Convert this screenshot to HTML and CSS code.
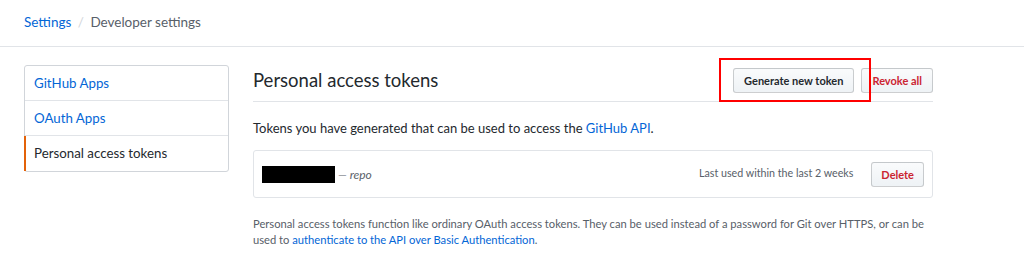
FILE: index.html
```html
<!DOCTYPE html>
<html lang="en">
<head>
  <meta charset="UTF-8" />
  <title>Personal access tokens</title>
  <link rel="stylesheet" href="styles.css">
</head>
<body>

  <!-- Breadcrumb header -->
  <div class="page-head">
    <a href="#" class="crumb-link">Settings</a>
    <span class="crumb-sep">/</span>
    <span class="crumb-current">Developer settings</span>
  </div>

  <div class="container">
    <!-- Left menu -->
    <nav class="menu">
      <a href="#" class="menu-item">GitHub Apps</a>
      <a href="#" class="menu-item">OAuth Apps</a>
      <a href="#" class="menu-item selected">Personal access tokens</a>
    </nav>

    <!-- Main column -->
    <div class="main">
      <div class="subhead">
        <h2 class="subhead-title">Personal access tokens</h2>
        <div class="subhead-actions">
          <span class="marked">
            <a href="#" class="btn btn-sm">Generate new token</a>
          </span>
          <a href="#" class="btn btn-sm btn-danger">Revoke all</a>
        </div>
      </div>

      <p class="intro">Tokens you have generated that can be used to access the <a href="#">GitHub API</a>.</p>

      <div class="token-list">
        <div class="token-row">
          <div class="token-name">
            <span class="redacted"></span>
            <em class="token-scope">&mdash; repo</em>
          </div>
          <div class="token-meta">
            <span class="last-used">Last used within the last 2 weeks</span>
            <a href="#" class="btn btn-sm btn-danger">Delete</a>
          </div>
        </div>
      </div>

      <p class="note">Personal access tokens function like ordinary OAuth access tokens. They can be used instead of a password for Git over HTTPS, or can be used to <a href="#">authenticate to the API over Basic Authentication</a>.</p>
    </div>
  </div>

</body>
</html>
```

FILE: styles.css
```css
* { margin: 0; padding: 0; box-sizing: border-box; }

body {
  font-family: Lato, "Open Sans", sans-serif;
  font-size: 13px;
  color: #24292e;
  background: #fff;
}

a { color: #0366d6; text-decoration: none; }

/* header */
.page-head {
  height: 47px;
  padding: 10px 24px 0;
  border-bottom: 1px solid #e1e4e8;
  font-size: 13.5px;
  line-height: 24px;
}
.crumb-sep { color: #d1d5da; margin: 0 3px; }
.crumb-current { color: #586069; }

/* layout */
.container {
  display: flex;
  gap: 24px;
  width: 933px;
  padding: 18px 0 0 24px;
}

/* sidebar */
.menu {
  width: 205px;
  flex-shrink: 0;
  align-self: flex-start;
  border: 1px solid #d1d5da;
  border-radius: 3px;
}
.menu-item {
  display: block;
  height: 35px;
  padding: 0 10px 0 9px;
  line-height: 34px;
  border-bottom: 1px solid #e1e4e8;
  font-size: 13.3px;
}
.menu-item:last-child { border-bottom: 0; }
.menu-item.selected {
  color: #24292e;
  border-left: 2px solid #e36209;
  padding-left: 8px;
  margin-left: -1px;
}

/* main */
.main { flex: 1; }

.subhead {
  display: flex;
  align-items: center;
  justify-content: space-between;
  padding: 2px 0 8px;
  border-bottom: 1px solid #e1e4e8;
}
.subhead-title {
  font-size: 18.5px;
  font-weight: 400;
  line-height: 26px;
}
.subhead-actions { display: flex; gap: 7px; }

.btn {
  display: inline-block;
  padding: 0 10px;
  height: 25px;
  line-height: 23px;
  font-size: 11px;
  font-weight: 700;
  color: #24292e;
  background: linear-gradient(#fafbfc, #eff3f6 90%);
  border: 1px solid rgba(27,31,35,0.2);
  border-radius: 3px;
  white-space: nowrap;
}
.btn-danger { color: #cb2431; }

/* red annotation box round the generate button */
.marked { position: relative; }
.marked::after {
  content: "";
  position: absolute;
  top: -10px;
  left: -14px;
  width: 148px;
  height: 40px;
  border: 2px solid #f00;
  pointer-events: none;
}

.intro {
  margin-top: 17px;
  font-size: 13px;
  line-height: 18px;
}

.token-list {
  margin-top: 13px;
  border: 1px solid #e1e4e8;
  border-radius: 3px;
}
.token-row {
  display: flex;
  align-items: center;
  justify-content: space-between;
  height: 46px;
  padding: 0 8px;
}
.token-name { display: flex; align-items: center; gap: 3px; }
.redacted {
  display: inline-block;
  width: 73px;
  height: 17px;
  background: #000;
}
.token-scope { color: #586069; font-size: 12px; }
.token-meta { display: flex; align-items: center; gap: 18px; }
.last-used { color: #586069; font-size: 10.7px; margin-top: -3px; }
.token-meta .btn { padding: 0 9px; }

.note {
  margin-top: 18px;
  font-size: 11.2px;
  line-height: 16px;
  color: #586069;
}
```
